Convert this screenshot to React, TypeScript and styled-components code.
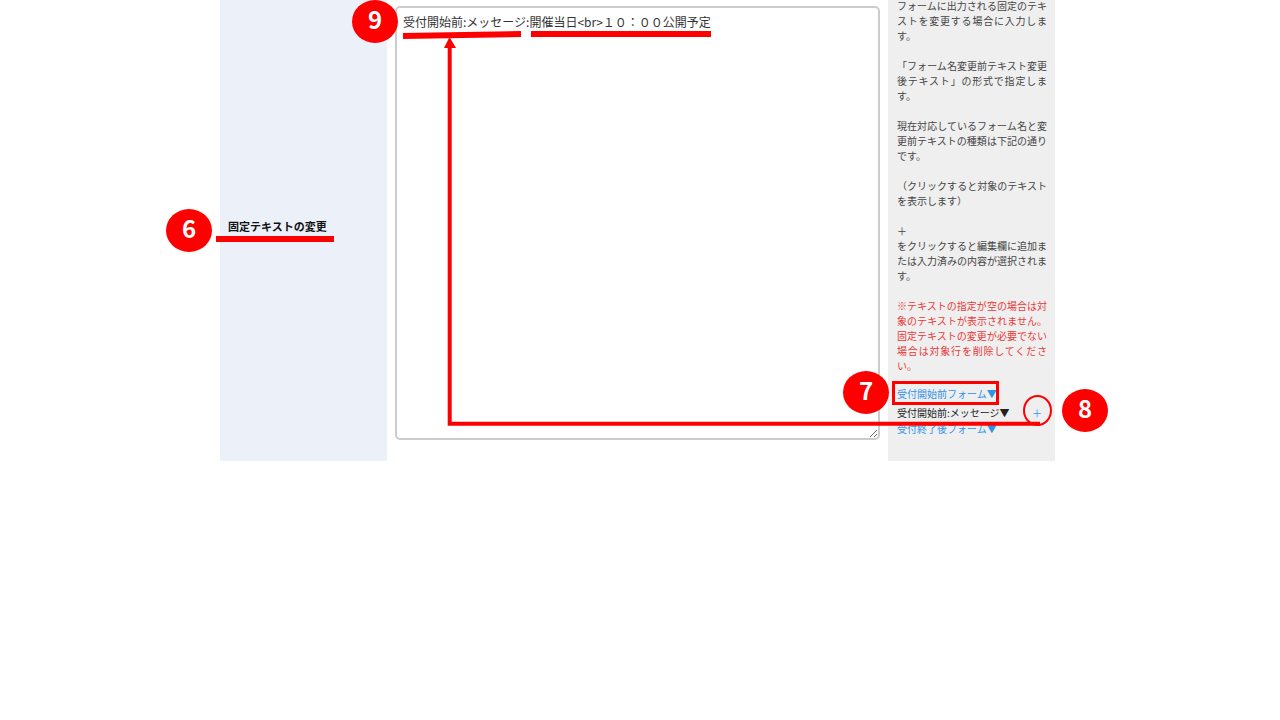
import React from "react";
import styled, { createGlobalStyle } from "styled-components";

const GlobalStyle = createGlobalStyle`
  * { box-sizing: border-box; }
  body {
    margin: 0;
    background: #fff;
    color: #333;
    font-family: "Noto Sans CJK JP", "Noto Sans", sans-serif;
  }
`;

const Page = styled.main`
  padding: 0 225px 0 220px;
`;

const SettingRow = styled.section`
  position: relative;
  display: grid;
  grid-template-columns: 1fr 3fr 1fr;
`;

const LabelCell = styled.div`
  display: flex;
  align-items: center;
  padding: 0 8px 10px;
  background: #ecf1f9;
`;

const FieldLabel = styled.label`
  font-size: 11px;
  line-height: 16px;
  font-weight: 700;
  color: #111;
`;

const InputCell = styled.div`
  display: flex;
  padding: 6px 8px 21px;
`;

const TextArea = styled.textarea`
  width: 100%;
  height: 434px;
  padding: 5px 6px;
  border: 2px solid #ccc;
  border-radius: 5px;
  outline: none;
  background: #fff;
  color: #333;
  font-family: inherit;
  font-size: 12px;
  line-height: 18px;
  resize: vertical;
`;

const HelpCell = styled.aside`
  padding: 0 8px 24px 9px;
  background: #efefef;
  font-size: 10px;
  line-height: 15px;
`;

const HelpBody = styled.div`
  margin-top: -2px;
  margin-bottom: 11px;
`;

const HelpText = styled.p<{ $warning?: boolean }>`
  margin: 0 0 15px;
  text-align: justify;
  color: ${(p) => (p.$warning ? "#e83a3a" : "#444")};
  &:last-child { margin-bottom: 0; }
`;

const TargetItem = styled.div<{ $last?: boolean }>`
  display: flex;
  align-items: center;
  justify-content: space-between;
  height: ${(p) => (p.$last ? "12px" : "19px")};
  padding-right: 5px;
  color: #222;
  white-space: nowrap;
`;

const FormLink = styled.a`
  color: #2f93ec;
  text-decoration: none;
`;

const AddButton = styled.button`
  padding: 0;
  border: 0;
  background: none;
  color: #2f93ec;
  font: inherit;
  cursor: pointer;
`;

const Badge = styled.span<{ $x: number; $y: number }>`
  position: absolute;
  left: ${(p) => p.$x}px;
  top: ${(p) => p.$y}px;
  display: flex;
  align-items: center;
  justify-content: center;
  width: 46px;
  height: 43px;
  padding-bottom: 5px;
  border-radius: 50%;
  background: #f00;
  color: #fff;
  font-size: 24px;
  line-height: 24px;
  font-weight: 700;
`;

const Marks = styled.svg`
  position: absolute;
  left: 0;
  top: 0;
  overflow: visible;
  pointer-events: none;
`;

const badges = [
  { n: 9, x: 132, y: 0 },
  { n: 6, x: -54, y: 209 },
  { n: 7, x: 623, y: 371 },
  { n: 8, x: 842, y: 389 },
];

export default function App() {
  return (
    <>
      <GlobalStyle />
      <Page>
        <SettingRow>
          <LabelCell>
            <FieldLabel htmlFor="fixed-text">固定テキストの変更</FieldLabel>
          </LabelCell>
          <InputCell>
            <TextArea
              id="fixed-text"
              spellCheck={false}
              defaultValue="受付開始前:メッセージ:開催当日<br>１０：００公開予定"
            />
          </InputCell>
          <HelpCell>
            <HelpBody>
              <HelpText>フォームに出力される固定のテキストを変更する場合に入力します。</HelpText>
              <HelpText>「フォーム名変更前テキスト変更後テキスト」の形式で指定します。</HelpText>
              <HelpText>現在対応しているフォーム名と変更前テキストの種類は下記の通りです。</HelpText>
              <HelpText>（クリックすると対象のテキストを表示します）</HelpText>
              <HelpText>
                ＋<br />
                をクリックすると編集欄に追加または入力済みの内容が選択されます。
              </HelpText>
              <HelpText $warning>
                ※テキストの指定が空の場合は対象のテキストが表示されません。固定テキストの変更が必要でない場合は対象行を削除してください。
              </HelpText>
            </HelpBody>
            <TargetItem>
              <FormLink href="#before">受付開始前フォーム▼</FormLink>
            </TargetItem>
            <TargetItem>
              <span>受付開始前:メッセージ▼</span>
              <AddButton type="button">＋</AddButton>
            </TargetItem>
            <TargetItem $last>
              <FormLink href="#after">受付終了後フォーム▼</FormLink>
            </TargetItem>
          </HelpCell>

          <Marks width="835" height="461" viewBox="0 0 835 461" aria-hidden="true">
            <g fill="none" stroke="#f00">
              <path d="M183 36 L301 34" strokeWidth="6" />
              <path d="M311 34 H491" strokeWidth="6" />
              <path d="M-4 239 H114" strokeWidth="6" />
              <path d="M229.7 46 V423.8 H820" strokeWidth="4" />
              <rect x="673.5" y="382.5" width="104" height="21" strokeWidth="3" />
              <ellipse cx="817.5" cy="410.5" rx="13.5" ry="14.5" strokeWidth="2" />
            </g>
            <path d="M229.5 37 L236 48 H224 Z" fill="#f00" />
          </Marks>
          {badges.map((b) => (
            <Badge key={b.n} $x={b.x} $y={b.y}>
              {b.n}
            </Badge>
          ))}
        </SettingRow>
      </Page>
    </>
  );
}
